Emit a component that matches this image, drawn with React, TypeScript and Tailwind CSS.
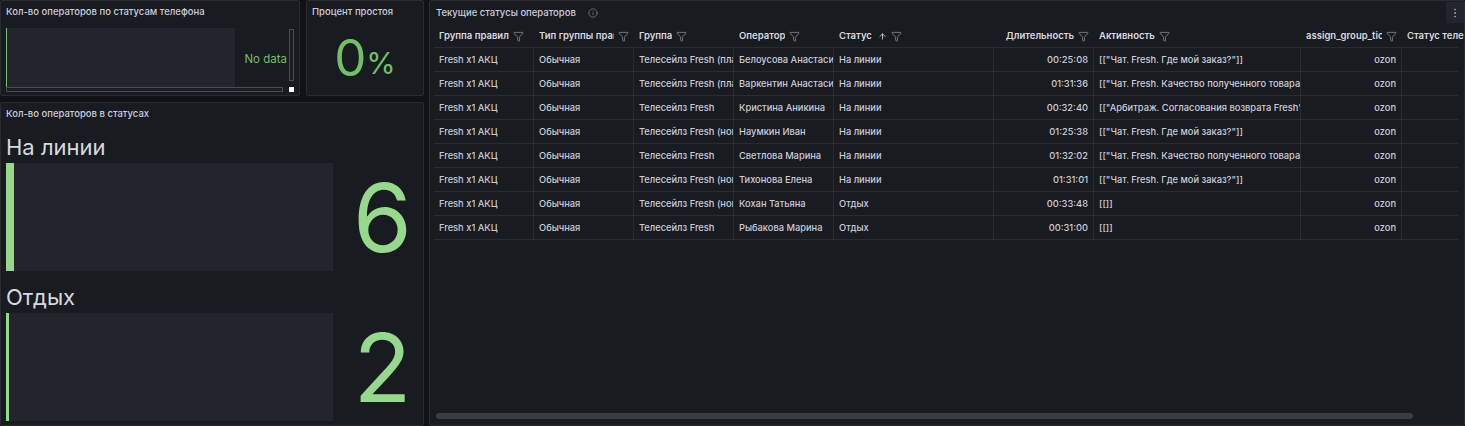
import { Filter, ArrowUp, Info, EllipsisVertical } from "lucide-react";

type Col = { title: string; w: number; right?: boolean; sort?: boolean };

const columns: Col[] = [
  { title: "Группа правил", w: 100 },
  { title: "Тип группы правил", w: 100 },
  { title: "Группа", w: 100 },
  { title: "Оператор", w: 100 },
  { title: "Статус", w: 160, sort: true },
  { title: "Длительность", w: 100, right: true },
  { title: "Активность", w: 207 },
  { title: "assign_group_ticket", w: 101, right: true },
  { title: "Статус телефона", w: 120 },
];

const rows: string[][] = [
  ["Fresh x1 АКЦ", "Обычная", "Телесейлз Fresh (план)", "Белоусова Анастасия", "На линии", "00:25:08", '[["Чат. Fresh. Где мой заказ?"]]', "ozon", ""],
  ["Fresh x1 АКЦ", "Обычная", "Телесейлз Fresh (план)", "Варкентин Анастасия", "На линии", "01:31:36", '[["Чат. Fresh. Качество полученного товара"]]', "ozon", ""],
  ["Fresh x1 АКЦ", "Обычная", "Телесейлз Fresh", "Кристина Аникина", "На линии", "00:32:40", '[["Арбитраж. Согласования возврата Fresh"]]', "ozon", ""],
  ["Fresh x1 АКЦ", "Обычная", "Телесейлз Fresh (новые)", "Наумкин Иван", "На линии", "01:25:38", '[["Чат. Fresh. Где мой заказ?"]]', "ozon", ""],
  ["Fresh x1 АКЦ", "Обычная", "Телесейлз Fresh", "Светлова Марина", "На линии", "01:32:02", '[["Чат. Fresh. Качество полученного товара"]]', "ozon", ""],
  ["Fresh x1 АКЦ", "Обычная", "Телесейлз Fresh (новые)", "Тихонова Елена", "На линии", "01:31:01", '[["Чат. Fresh. Где мой заказ?"]]', "ozon", ""],
  ["Fresh x1 АКЦ", "Обычная", "Телесейлз Fresh (новые)", "Кохан Татьяна", "Отдых", "00:33:48", "[[]]", "ozon", ""],
  ["Fresh x1 АКЦ", "Обычная", "Телесейлз Fresh", "Рыбакова Марина", "Отдых", "00:31:00", "[[]]", "ozon", ""],
];

const statuses = [
  { label: "На линии", value: 6, bar: "w-[8px]" },
  { label: "Отдых", value: 2, bar: "w-[3px]" },
];

function PanelTitle({ children }: { children: React.ReactNode }) {
  return (
    <div className="flex h-[22px] shrink-0 items-center px-[5px] text-[9.5px] font-medium text-[#ccccdc]">
      {children}
    </div>
  );
}

export default function App() {
  return (
    <div
      className="flex h-[426px] w-[1465px] gap-[5px] overflow-hidden bg-[#111217] text-[#ccccdc]"
      style={{ fontFamily: "Inter, 'Noto Sans', sans-serif" }}
    >
      {/* left column */}
      <div className="flex w-[424px] shrink-0 flex-col gap-[6px]">
        <div className="flex h-[96px] gap-[6px]">
          {/* phone statuses */}
          <div className="flex w-[300px] flex-col rounded-[2px] border border-[#2a2c31] bg-[#181b1f]">
            <PanelTitle>Кол-во операторов по статусам телефона</PanelTitle>
            <div className="mt-[5px] flex flex-col px-[5px]">
              <div className="flex h-[59px]">
                <div className="w-[229px] border-l border-[#73bf69] bg-[#22252b]" />
                <div className="flex flex-1 items-center justify-end pr-[2px] pt-[4px] text-[11.5px] text-[#73bf69]">No data</div>
                <div className="mt-[1px] h-[52px] w-[5px] border border-[#4a4d53] bg-[#1b1d21]" />
              </div>
              <div className="flex items-center">
                <div className="h-[5px] w-[277px] border border-[#4a4d53] bg-[#1b1d21]" />
                <div className="ml-[6px] h-[5px] w-[5px] bg-white" />
              </div>
            </div>
          </div>
          {/* idle percent */}
          <div className="flex flex-1 flex-col rounded-[2px] border border-[#2a2c31] bg-[#181b1f]">
            <PanelTitle>Процент простоя</PanelTitle>
            <div className="flex flex-1 items-center justify-center pb-[4px] text-[#73bf69]">
              <span className="text-[51px] leading-none">0</span>
              <span className="mt-[12px] text-[30px] leading-none">%</span>
            </div>
          </div>
        </div>

        {/* statuses bar gauge */}
        <div className="flex flex-1 flex-col rounded-[2px] border border-[#2a2c31] bg-[#181b1f]">
          <PanelTitle>Кол-во операторов в статусах</PanelTitle>
          <div className="mt-[10px] flex flex-col gap-[14px] px-[5px]">
            {statuses.map((s) => (
              <div key={s.label} className="flex flex-col">
                <div className="h-[24px] text-[22px] leading-[24px] text-[#d8d9e0]">{s.label}</div>
                <div className="mt-[4px] flex items-center">
                  <div className="h-[108px] w-[327px] bg-[#22252b]">
                    <div className={`h-full ${s.bar} bg-[#96d98d]`} />
                  </div>
                  <div className="flex-1 pl-[14px] text-center text-[95px] leading-none text-[#96d98d]">{s.value}</div>
                </div>
              </div>
            ))}
          </div>
        </div>
      </div>

      {/* operators table */}
      <div className="relative flex min-w-0 flex-1 flex-col overflow-hidden rounded-[2px] border border-[#2a2c31] bg-[#181b1f]">
        <div className="flex h-[24px] shrink-0 items-center gap-[12px] px-[6px] text-[9.5px] font-medium text-[#ccccdc]">
          <span>Текущие статусы операторов</span>
          <Info size={10} strokeWidth={1.6} className="text-[#8e8e9a]" />
        </div>
        <div className="absolute right-0 top-[1px] flex h-[21px] w-[18px] items-center justify-center bg-[#22252b] text-[#9fa1aa]">
          <EllipsisVertical size={12} strokeWidth={2} />
        </div>

        <div className="flex min-h-0 flex-1 flex-col overflow-hidden pl-[4px] pr-[6px]">
          <div className="flex h-[23px] shrink-0 border-b border-[#2a2c31] text-[9.5px] font-semibold text-[#d8d9e0]">
            {columns.map((c) => (
              <div
                key={c.title}
                className={`flex shrink-0 items-center gap-[3px] px-[5px] ${c.right ? "justify-end" : ""}`}
                style={{ width: c.w }}
              >
                <span className="min-w-0 overflow-hidden whitespace-nowrap">{c.title}</span>
                {c.sort && <ArrowUp size={9} strokeWidth={2.2} className="ml-[3px] shrink-0" />}
                <Filter size={11} strokeWidth={1.5} className="ml-[1px] shrink-0 text-[#9fa1aa]" />
              </div>
            ))}
          </div>
          {rows.map((r, i) => (
            <div key={i} className="flex h-[24px] shrink-0 border-b border-[#2a2c31] text-[9.3px] font-medium text-[#ccccdc]">
              {columns.map((c, j) => (
                <div
                  key={c.title}
                  className={`flex shrink-0 items-center overflow-hidden whitespace-nowrap px-[5px] ${j < columns.length - 1 ? "border-r border-[#2a2c31]" : ""} ${c.right ? "justify-end" : ""}`}
                  style={{ width: c.w }}
                >
                  {r[j]}
                </div>
              ))}
            </div>
          ))}
          <div className="flex-1" />
          <div className="mb-[6px] ml-[2px] h-[6px] w-[977px] rounded-full bg-[#3a3c41]" />
        </div>
      </div>
    </div>
  );
}
